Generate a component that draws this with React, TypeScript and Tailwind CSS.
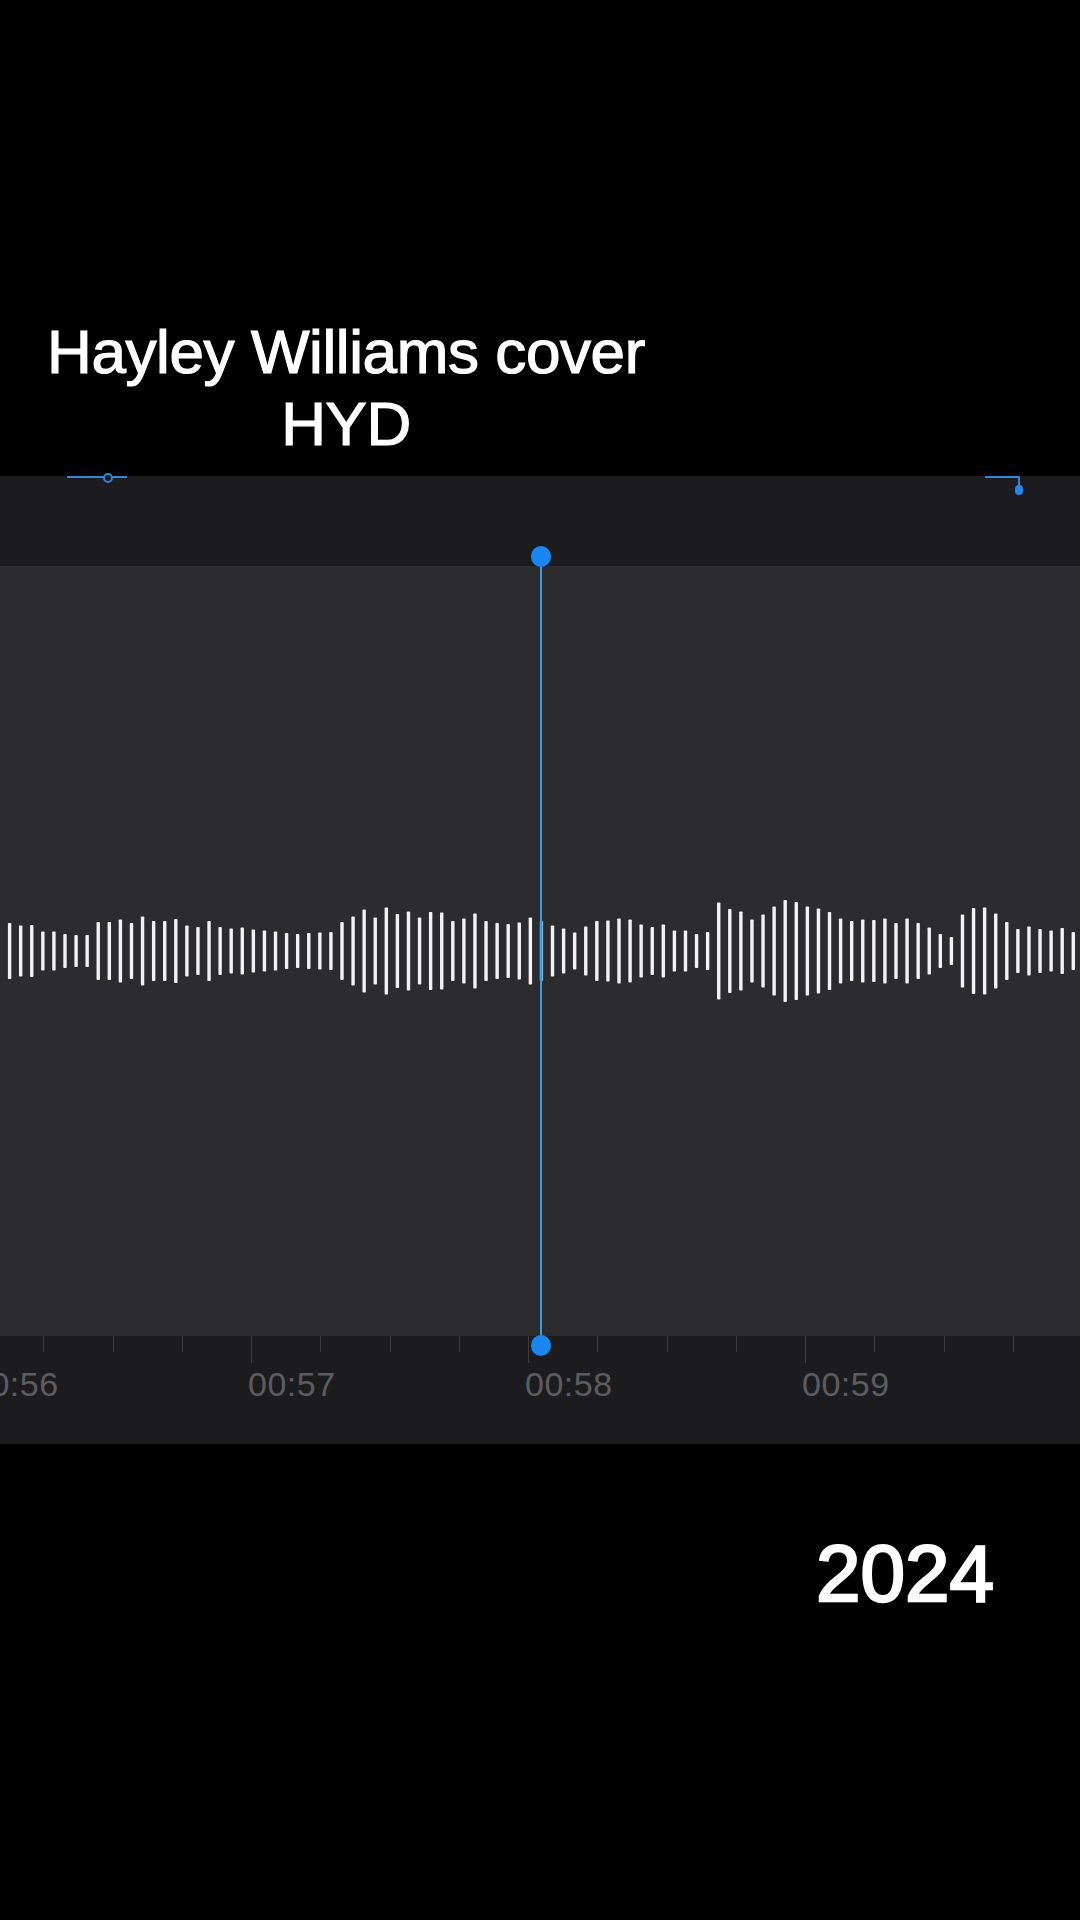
import React from "react";

// Amplitudes of the visible waveform bars, left to right (bar heights in px)
const BARS: number[] = [
  56, 51, 52, 39, 39, 34, 32, 32, 58, 58, 63, 56, 69, 60, 60, 64, 51, 48, 60, 48,
  45, 47, 43, 41, 39, 36, 34, 36, 37, 38, 58, 69, 83, 67, 87, 74, 79, 67, 78, 77,
  60, 65, 75, 60, 56, 54, 57, 67,
  60,
  51, 45, 37, 49, 60, 61, 65, 63, 53, 48, 53, 41, 41, 34, 38, 97, 84, 79, 63, 73,
  89, 102, 98, 89, 85, 78, 65, 60, 63, 62, 65, 56, 65, 56, 47, 34, 28, 73, 86, 87,
  75, 58, 44, 49, 44, 41, 46, 38,
];

// One entry per second on the ruler; the last one has no label in view
const SECONDS = ["00:56", "00:57", "00:58", "00:59", ""];

function Waveform() {
  const h = 120;
  return (
    <svg width={1080} height={h} viewBox={`0 0 1080 ${h}`} className="block">
      {BARS.map((bh, i) => {
        const cx = 9.6 + i * 11.08;
        const isHead = i === 48;
        return (
          <rect
            key={i}
            x={cx - 1.7}
            y={h / 2 - bh / 2}
            width={3.4}
            height={bh}
            rx={0.8}
            fill={isHead ? "#6bb8e6" : "#f2f2f2"}
          />
        );
      })}
    </svg>
  );
}

function Ruler() {
  return (
    <div className="flex ml-[-26px]">
      {SECONDS.map((label, k) => (
        <div key={k} className="w-[277px] shrink-0 flex flex-col">
          <div className="flex h-[27px] items-start">
            {[0, 1, 2, 3].map((t) => (
              <div key={t} className="w-[69.25px] shrink-0">
                <div
                  className={
                    t === 0
                      ? "h-[27px] w-px bg-[#3d3d40]"
                      : "h-[16px] w-px bg-[#3d3d40]"
                  }
                />
              </div>
            ))}
          </div>
          <div className="mt-[4px] ml-[-3px] h-[34px] text-[34px] leading-[34px] text-[#5c5c60] tracking-[0.5px]">
            {label}
          </div>
        </div>
      ))}
    </div>
  );
}

export default function App() {
  return (
    <div className="relative w-[1080px] h-[1920px] bg-black overflow-hidden flex flex-col font-['Liberation_Sans',Arial,sans-serif] text-white">
      {/* caption */}
      <div className="pt-[316px] ml-[46px] w-[600px] text-center text-[62px] leading-[72px] tracking-[-0.4px] [-webkit-text-stroke:1.2px_white]">
        <p>Hayley Williams cover</p>
        <p>HYD</p>
      </div>

      {/* overview strip */}
      <div className="relative mt-[16px] h-[90px] bg-[#1c1c1e] shrink-0">
        <div className="absolute left-[67px] top-0 w-[60px] h-[2px] bg-[#2f86e0]" />
        <div className="absolute left-[103px] top-[-3px] w-[10px] h-[10px] rounded-full border-2 border-[#2f86e0] bg-[#1c1c1e]" />
        <div className="absolute left-[985px] top-0 w-[35px] h-[2px] bg-[#2f86e0]" />
        <div className="absolute left-[1018px] top-0 w-[2px] h-[12px] bg-[#2f86e0]" />
        <div className="absolute left-[1015px] top-[9px] w-[8px] h-[10px] rounded-full bg-[#1e88f0]" />
      </div>

      {/* waveform */}
      <div className="h-[770px] bg-[#2c2c2f] flex items-center shrink-0">
        <Waveform />
      </div>

      {/* time ruler */}
      <div className="h-[108px] bg-[#1c1c1e] overflow-hidden shrink-0">
        <Ruler />
      </div>

      {/* year */}
      <div className="mt-[90px] pr-[86px] text-right text-[80px] leading-[80px] [-webkit-text-stroke:2.5px_white]">
        2024
      </div>

      {/* playhead */}
      <div className="absolute left-[540px] top-[557px] w-[2px] h-[789px] bg-[#3e9cdb]" />
      <div className="absolute left-[531px] top-[546px] w-[20px] h-[21px] rounded-full bg-[#1a86f2]" />
      <div className="absolute left-[531px] top-[1335px] w-[20px] h-[21px] rounded-full bg-[#1a86f2]" />
    </div>
  );
}
